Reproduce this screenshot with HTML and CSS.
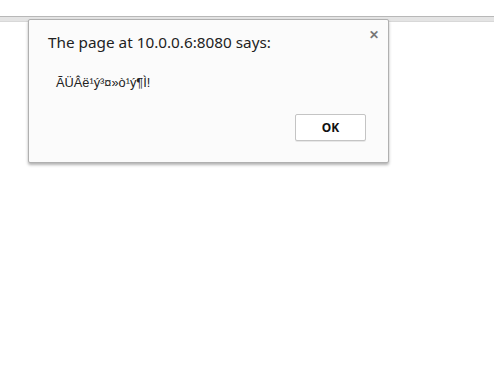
FILE: index.html
```html
<!DOCTYPE html>
<html lang="en">
<head>
    <meta charset="UTF-8">
    <title>Alert</title>
    <link rel="stylesheet" href="styles.css">
</head>
<body>
    <!-- browser chrome edge -->
    <div class="toolbar"></div>

    <div class="dialog">
        <span class="close">&#x2715;</span>
        <div class="title">The page at 10.0.0.6:8080 says:</div>
        <div class="message">ÃÜÂë¹ý³¤»ò¹ý¶Ì!</div>
        <div class="actions">
            <button class="button">OK</button>
        </div>
    </div>
</body>
</html>
```

FILE: styles.css
```css
body {
    margin: 0;
    background-color: #fff;
    font-family: "Noto Sans", Arial, sans-serif;
}

.toolbar {
    margin-top: 16px;
    height: 4px;
    border-top: 1px solid #b8b8b8;
    border-bottom: 1px solid #d8d8d8;
    background-color: #e4e4e4;
}

.dialog {
    position: absolute;
    left: 28px;
    top: 19px;
    width: 359px;
    height: 142px;
    background-color: #fbfbfb;
    border: 1px solid #b0b0b0;
    border-radius: 2px;
    box-shadow: 0 2px 3px rgba(0, 0, 0, 0.3);
}

.close {
    position: absolute;
    top: 6px;
    right: 9px;
    font-size: 12px;
    font-weight: bold;
    color: #777;
}

.title {
    margin: 12px 0 0 19px;
    font-size: 15.3px;
    color: #222;
}

.message {
    margin: 23px 0 0 27px;
    font-family: "Liberation Sans", Arial, sans-serif;
    font-size: 12.8px;
    color: #222;
}

.actions {
    display: flex;
    justify-content: flex-end;
    padding: 24px 22px 0 0;
}

.button {
    width: 71px;
    height: 27px;
    background-color: #fff;
    border: 1px solid #c4c4c4;
    border-radius: 2px;
    box-shadow: 0 1px 0 rgba(0, 0, 0, 0.08);
    font-family: "Noto Sans", Arial, sans-serif;
    font-size: 12px;
    font-weight: bold;
    color: #111;
}
```
